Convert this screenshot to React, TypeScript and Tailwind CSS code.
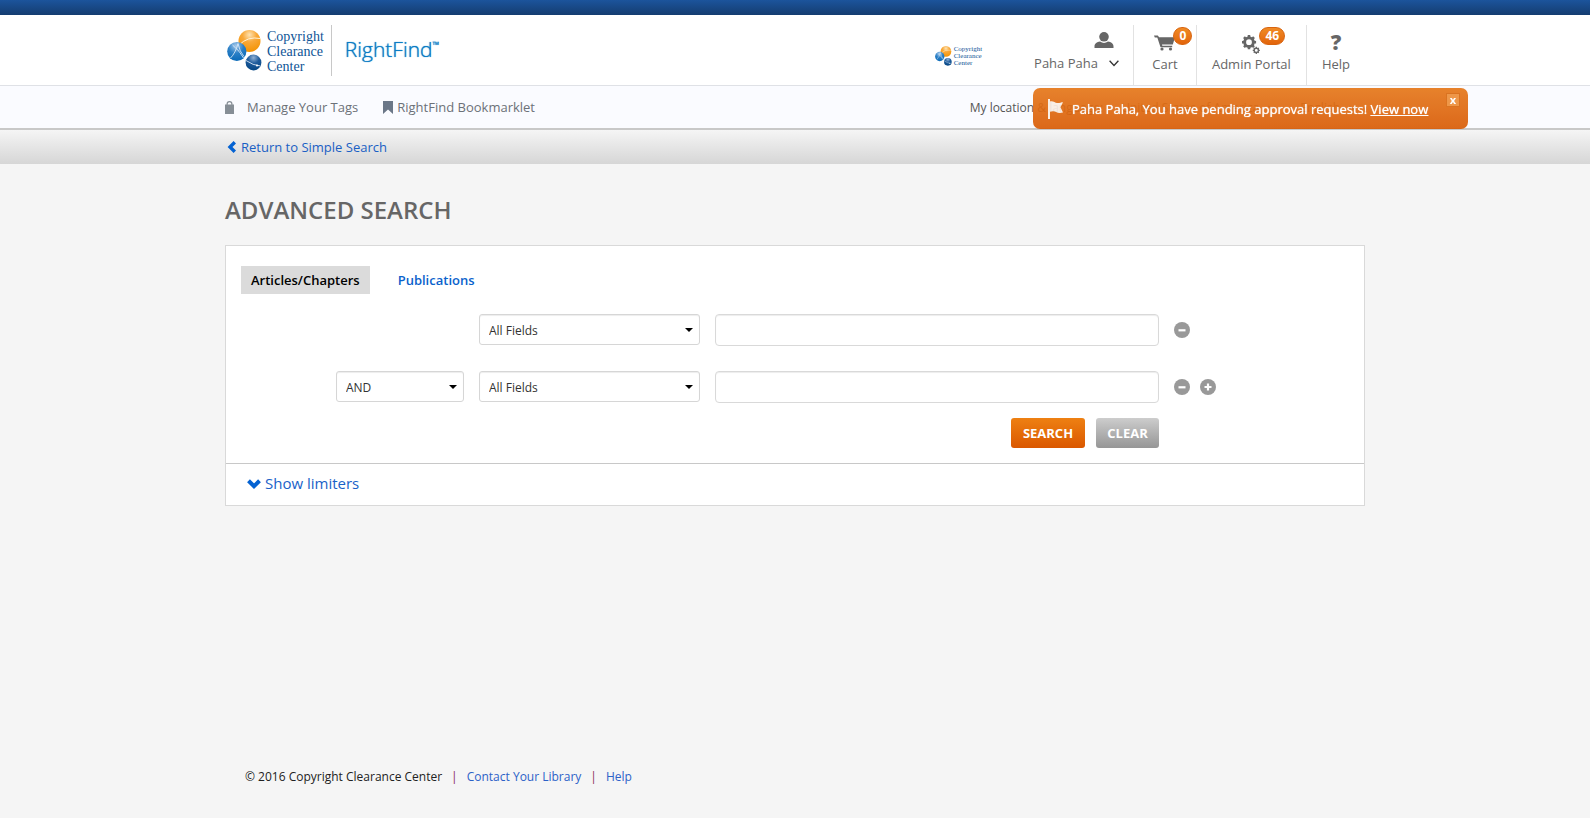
import type { ReactNode } from "react";

function Globes({ className }: { className: string }) {
  return (
    <svg viewBox="0 0 35 41" className={className} aria-hidden="true">
      <defs>
        <radialGradient id="globe-orange" cx="0.5" cy="0.22" r="0.8">
          <stop offset="0" stopColor="#fde3b4" />
          <stop offset="0.4" stopColor="#f9a93a" />
          <stop offset="1" stopColor="#f39200" />
        </radialGradient>
        <radialGradient id="globe-blue" cx="0.45" cy="0.2" r="0.8">
          <stop offset="0" stopColor="#a5c8ea" />
          <stop offset="0.5" stopColor="#2a7fc6" />
          <stop offset="1" stopColor="#0a6ab8" />
        </radialGradient>
        <radialGradient id="globe-navy" cx="0.5" cy="0.2" r="0.8">
          <stop offset="0" stopColor="#8fb0d4" />
          <stop offset="0.45" stopColor="#1f5c9c" />
          <stop offset="1" stopColor="#054684" />
        </radialGradient>
      </defs>
      <circle cx="22.500" cy="11" r="11" fill="url(#globe-orange)" />
      <path d="M12 15q9-9 21-6.500" fill="none" stroke="#fff2d8" strokeWidth="1" />
      <circle cx="9.800" cy="21.500" r="9.600" fill="url(#globe-blue)" />
      <path d="M11 13.500Q8.500 23 3.500 28M5.500 15Q13 21 16.500 28M11 13.500q1.500 8 6 13" fill="none" stroke="#e4f0fa" strokeWidth="0.800" />
      <circle cx="26.500" cy="32.500" r="7.900" fill="url(#globe-navy)" />
      <path d="M19 30.500q7 5 14.500 5.500" fill="none" stroke="#dbe8f5" strokeWidth="0.900" />
      <circle cx="30" cy="35.500" r="1" fill="#fff" />
    </svg>
  );
}

function Chevron({ className }: { className: string }) {
  return (
    <svg viewBox="0 0 10 7" className={className} fill="none" stroke="currentColor" strokeWidth="1.300" aria-hidden="true">
      <path d="M0.600 0.800 5 5.500 9.400 0.800" />
    </svg>
  );
}

function PersonIcon() {
  return (
    <svg viewBox="0 0 20 16" className="h-4 w-5" fill="#666" aria-hidden="true">
      <circle cx="10" cy="4.800" r="4.800" />
      <path d="M0.500 16v-1.500C0.500 11.500 3 10.200 6 9.600q4 2.600 8 0c3 .6 5.500 1.900 5.500 4.900V16z" />
    </svg>
  );
}

function CartIcon() {
  return (
    <svg viewBox="0 0 21 16" className="h-4 w-[21px]" fill="#666" aria-hidden="true">
      <path d="M0 .5h3.800l1.300 1.700H21l-2.200 7.300H8l.3 1.300h9.900v1.500H6.500L3.300 2.500H.8z" />
      <circle cx="8" cy="14" r="1.600" />
      <circle cx="16.500" cy="14" r="1.600" />
    </svg>
  );
}

function gearPath(cx: number, cy: number, r: number, teeth: number) {
  const steps = [
    [-0.5, 0.8],
    [-0.3, 0.8],
    [-0.22, 1],
    [0.22, 1],
    [0.3, 0.8],
  ];
  const points: string[] = [];
  for (let i = 0; i < teeth; i++) {
    for (const [offset, scale] of steps) {
      const a = ((i + offset) * 2 * Math.PI) / teeth;
      points.push(`${(cx + Math.sin(a) * r * scale).toFixed(2)} ${(cy - Math.cos(a) * r * scale).toFixed(2)}`);
    }
  }
  const h = r * 0.4;
  return `M${points.join("L")}ZM${cx - h} ${cy}a${h} ${h} 0 1 0 ${2 * h} 0a${h} ${h} 0 1 0 ${-2 * h} 0Z`;
}

function GearsIcon() {
  return (
    <svg viewBox="0 0 18 19" className="h-[19px] w-[18px]" fill="#666" fillRule="evenodd" aria-hidden="true">
      <path d={gearPath(7, 7.2, 7.2, 8)} />
      <path d={gearPath(14.3, 15.4, 3.6, 8)} />
    </svg>
  );
}

function Badge({ children }: { children: ReactNode }) {
  return (
    <span className="rounded-full border border-[#d8640f] bg-linear-to-b from-[#f08a24] to-[#e2640a] px-[5px] text-[12px] leading-4 font-bold text-white">
      {children}
    </span>
  );
}

function HeaderItem({ label, className, children }: { label: string; className: string; children: ReactNode }) {
  return (
    <a href="#" className={`flex flex-col items-center border-l border-[#e2e2e2] ${className}`}>
      <span className="relative flex h-[29px] items-end justify-center">{children}</span>
      <span className="text-[13px] leading-5">{label}</span>
    </a>
  );
}

function SelectBox({ label, options, className }: { label: string; options: string[]; className: string }) {
  return (
    <div className={`grid items-center ${className}`}>
      <select
        aria-label={label}
        className="col-start-1 row-start-1 h-[31px] w-full appearance-none rounded-[3px] border border-[#d6d6d6] bg-white px-[9px] pt-[2px] text-[12px] text-[#333] shadow-[inset_0_1px_1px_rgba(0,0,0,0.075)]"
      >
        {options.map((o) => (
          <option key={o}>{o}</option>
        ))}
      </select>
      <svg viewBox="0 0 8 4" className="pointer-events-none col-start-1 row-start-1 mr-[7px] h-1 w-2 justify-self-end" aria-hidden="true">
        <path d="M0 0h8L4 4z" />
      </svg>
    </div>
  );
}

function RoundButton({ kind }: { kind: "plus" | "minus" }) {
  return (
    <button type="button" aria-label={kind === "plus" ? "Add row" : "Remove row"} className="size-4 cursor-pointer">
      <svg viewBox="0 0 16 16" className="size-4" aria-hidden="true">
        <circle cx="8" cy="8" r="8" fill="#999" />
        <path d={kind === "plus" ? "M4.500 8h7M8 4.500v7" : "M4.500 8.300h7"} stroke="#fff" strokeWidth="2.200" />
      </svg>
    </button>
  );
}

const fields = ["All Fields", "Title", "Author"];

function SearchRow({ operator, add }: { operator?: boolean; add?: boolean }) {
  return (
    <div className="flex items-start pl-[95px]">
      <div className="mr-[15px] w-32">{operator && <SelectBox label="Operator" options={["AND", "OR", "NOT"]} className="w-full" />}</div>
      <SelectBox label="Field" options={fields} className="mr-[15px] w-[221px]" />
      <input type="text" aria-label="Search term" className="h-8 w-[444px] rounded-[4px] border border-[#d9d9d9] bg-white px-2 text-[12px] shadow-[inset_0_1px_1px_rgba(0,0,0,0.075)]" />
      <div className="ml-[15px] flex h-8 items-center gap-[10px]">
        <RoundButton kind="minus" />
        {add && <RoundButton kind="plus" />}
      </div>
    </div>
  );
}

export default function App() {
  return (
    <div className="flex min-h-screen flex-col bg-[#f5f5f5] font-['Open_Sans','Noto_Sans',sans-serif] text-[13px] text-[#666]">
      <div className="h-[15px] bg-linear-to-b from-[#1c549c] to-[#143d70]" />

      <header className="border-b border-[#dfe1e6] bg-white">
        <div className="mx-auto flex h-[70px] w-full max-w-[1140px] items-start justify-between pt-[10px]">
          <a href="#" className="flex items-start">
            <span className="flex h-[51px] items-center gap-[5px] border-r border-[#c8c8c8] pr-[7px] pl-[2px]">
              <Globes className="h-[41px] w-[35px]" />
              <span className="pt-[2px] font-['Liberation_Serif',serif] text-[14px] leading-[15px] text-[#0f5496]">
                Copyright
                <br />
                Clearance
                <br />
                Center
              </span>
            </span>
            <span className="flex h-[50px] items-center pl-[13px] text-[21px] font-light text-[#0b7cc4] text-shadow-[0_0_1px_#0b7cc4]">
              RightFind<span className="self-start pt-[14px] text-[9px] leading-3 font-semibold">™</span>
            </span>
          </a>

          <div className="flex h-[60px]">
            <div className="mr-[52px] flex items-center gap-[2px] pt-[2px]">
              <Globes className="h-5 w-[17px]" />
              <span className="font-['Liberation_Serif',serif] text-[7px] leading-[7px] text-[#0f5496]">
                Copyright
                <br />
                Clearance
                <br />
                Center
              </span>
            </div>
            <button type="button" className="flex cursor-pointer flex-col items-end pt-[7px] pr-[14px]">
              <span className="pr-[5px]">
                <PersonIcon />
              </span>
              <span className="flex items-center gap-[11px] pt-[5px] leading-5">
                Paha Paha
                <Chevron className="h-[7px] w-[10px] text-[#333]" />
              </span>
            </button>
            <HeaderItem label="Cart" className="w-[63px]">
              <span className="pb-[3px]">
                <CartIcon />
              </span>
              <span className="absolute top-[2px] left-[19px] flex">
                <Badge>0</Badge>
              </span>
            </HeaderItem>
            <HeaderItem label="Admin Portal" className="px-[15px]">
              <GearsIcon />
              <span className="absolute top-[2px] left-[17px] flex">
                <Badge>46</Badge>
              </span>
            </HeaderItem>
            <HeaderItem label="Help" className="px-[15px]">
              <span className="text-[21px] leading-6 font-extrabold">?</span>
            </HeaderItem>
          </div>
        </div>
      </header>

      <nav className="border-b-2 border-[#c8c8c8] bg-[#fafbff]">
        <div className="relative mx-auto flex h-[42px] w-full max-w-[1140px] items-center pt-[2px] text-[#6c7178]">
          <a href="#" className="flex items-center gap-[13px]">
            <svg viewBox="0 0 9 13" className="mb-[2px] h-[13px] w-[9px]" fill="#868e96" aria-hidden="true">
              <path d="M0 3.500h1.500V3a3 3 0 0 1 6 0v.5H9V13H0zM2.700 3.500h3.600V3a1.800 1.800 0 0 0-3.600 0z" fillRule="evenodd" />
            </svg>
            Manage Your Tags
          </a>
          <a href="#" className="ml-[25px] flex items-center gap-[4px]">
            <svg viewBox="0 0 10 13" className="mb-[2px] h-[13px] w-[10px]" fill="#6b7788" aria-hidden="true">
              <path d="M0 0h10v13L5 8.500 0 13z" />
            </svg>
            RightFind Bookmarklet
          </a>
          <div className="mr-2 ml-auto flex items-center text-[12px] whitespace-nowrap text-[#555]">
            <span>My location &amp; language:</span>
            <button type="button" className="ml-[18px] flex items-center gap-[9px]">
              United States of America <Chevron className="h-[6px] w-[8px]" />
            </button>
            <button type="button" className="ml-[24px] flex items-center gap-[9px]">
              English <Chevron className="h-[6px] w-[8px]" />
            </button>
          </div>
          <div
            role="alert"
            className="absolute top-[2px] -right-[103px] flex h-[41px] w-[435px] items-center rounded-[7px] bg-linear-to-b from-[#e6781a] to-[#d95c06] pl-[14px] whitespace-nowrap text-white opacity-92"
          >
            <svg viewBox="0 0 16 20" className="mr-[9px] h-5 w-4" fill="#fbeee3" aria-hidden="true">
              <path d="M1 0h2v20H1zM3 2.500c3-1 5 1.500 7 1.500 2 .3 4-.7 6-.7l-2.500 4.900L16 13.500c-3 .8-5 .5-7-.6-2-1-4-.9-6-.2z" />
            </svg>
            <p className="pt-[2px] text-shadow-[0_0_1px_#fff]">
              Paha Paha, You have pending approval requests!{" "}
              <a href="#" className="underline">
                View now
              </a>
            </p>
            <button
              type="button"
              aria-label="Close"
              className="absolute top-[5px] right-[8px] flex size-[14px] items-center justify-center border border-[#d8680f] bg-[#ee8f3a] text-[11px] leading-3 font-bold"
            >
              x
            </button>
          </div>
        </div>
      </nav>

      <div className="bg-linear-to-b from-[#f5f5f5] to-[#d6d6d6]">
        <div className="mx-auto flex h-[34px] w-full max-w-[1140px] items-center pt-[2px]">
          <a href="#" className="flex items-center gap-[5px] pl-[2px] text-[#1a5fc4]">
            <svg viewBox="0 0 9 12" className="mb-[2px] h-3 w-[9px]" fill="none" stroke="#0462d2" strokeWidth="3.400" aria-hidden="true">
              <path d="M7.800 1.200 3 6l4.800 4.800" />
            </svg>
            Return to Simple Search
          </a>
        </div>
      </div>

      <main className="mx-auto w-full max-w-[1140px] grow">
        <h1 className="pt-[30px] pb-[19px] text-[24px] leading-8 font-semibold">ADVANCED SEARCH</h1>
        <section className="border border-[#d9d9d9] bg-white">
          <div className="flex gap-[18px] px-[15px] pt-5 font-semibold">
            <button type="button" className="h-7 bg-[#dbdbdb] px-[10px] pt-[2px] text-black">
              Articles/Chapters
            </button>
            <button type="button" className="h-7 px-[10px] pt-[2px] text-[#0a62cc]">
              Publications
            </button>
          </div>
          <form className="border-b border-[#c8c8c8] px-[15px] pt-5 pb-[15px]" onSubmit={(e) => e.preventDefault()}>
            <div className="flex flex-col gap-[25px]">
              <SearchRow />
              <SearchRow operator add />
            </div>
            <div className="flex w-[918px] justify-end gap-[11px] pt-[15px] font-bold text-white">
              <button type="submit" className="h-[30px] w-[74px] rounded-[3px] bg-linear-to-b from-[#ee8012] to-[#da5700] pt-[2px]">
                SEARCH
              </button>
              <button type="reset" className="h-[30px] w-[63px] rounded-[3px] bg-linear-to-b from-[#cdcdcd] to-[#969696] pt-[2px]">
                CLEAR
              </button>
            </div>
          </form>
          <button type="button" className="flex h-[41px] items-center gap-[4px] pb-[2px] pl-[21px] text-[15px] text-[#1a62c8]">
            <svg viewBox="0 0 14 10" className="h-[10px] w-[14px]" fill="none" stroke="#0462d2" strokeWidth="4" aria-hidden="true">
              <path d="M1.500 1.800 7 7.200l5.500-5.400" />
            </svg>
            Show limiters
          </button>
        </section>
      </main>

      <footer className="mx-auto flex w-full max-w-[1140px] gap-[9px] px-5 pb-8 text-[12px] leading-[18px] text-[#222]">
        <span>© 2016 Copyright Clearance Center</span>
        <span className="text-[#8a2a5a]">|</span>
        <a href="#" className="text-[#2c62c8]">
          Contact Your Library
        </a>
        <span className="text-[#8a2a5a]">|</span>
        <a href="#" className="text-[#2c62c8]">
          Help
        </a>
      </footer>
    </div>
  );
}
